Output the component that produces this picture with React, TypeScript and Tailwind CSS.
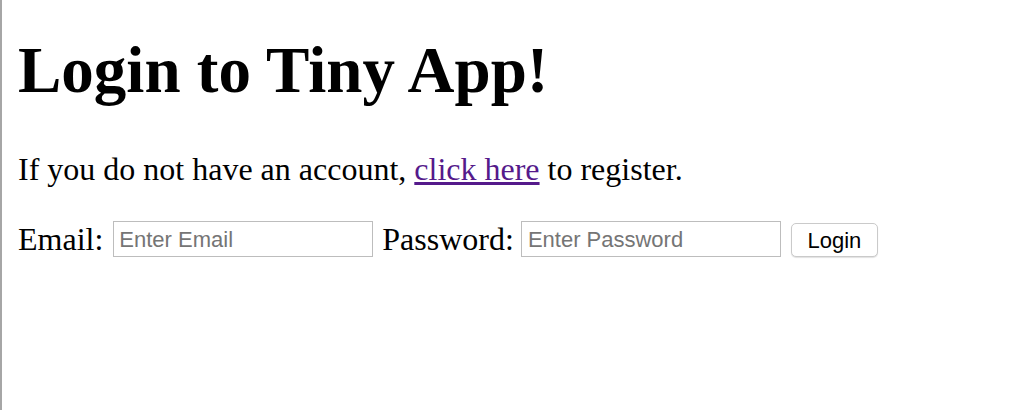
export default function App() {
  return (
    <div className="min-h-[410px] border-l-2 border-[#a6a6a6] bg-white pl-4 text-black font-['Liberation_Serif','Times_New_Roman',serif]">
      {/* Heading */}
      <h1 className="pt-[33px] text-[65px] font-bold leading-[74px]">Login to Tiny App!</h1>

      <p className="mt-[44px] text-[32px] leading-[37px]">
        If you do not have an account,{' '}
        <a href="#" className="text-[#551a8b] underline">
          click here
        </a>{' '}
        to register.
      </p>

      {/* Login form */}
      <form className="mt-[33px] flex h-[36px] items-center text-[32px] leading-[37px]" onSubmit={(e) => e.preventDefault()}>
        <label htmlFor="email">Email:</label>
        <input
          id="email"
          type="text"
          placeholder="Enter Email"
          className="ml-[10px] h-[36px] w-[260px] border border-[#bdbdbd] px-[5px] pt-[2px] font-['Liberation_Sans',Arial,sans-serif] text-[22px] leading-normal placeholder:text-[#757575] outline-none"
        />
        <label htmlFor="password" className="ml-[9px]">
          Password:
        </label>
        <input
          id="password"
          type="password"
          placeholder="Enter Password"
          className="ml-[7px] h-[36px] w-[260px] border border-[#bdbdbd] px-[6px] pt-[2px] font-['Liberation_Sans',Arial,sans-serif] text-[22px] leading-normal placeholder:text-[#757575] outline-none"
        />
        <button
          type="submit"
          className="ml-[10px] h-[34px] w-[87px] self-end rounded-[5px] border border-[#cacaca] bg-white pt-[1px] font-['Liberation_Sans',Arial,sans-serif] text-[22px] leading-none text-black shadow-[0_1px_1px_rgba(0,0,0,0.12)]"
        >
          Login
        </button>
      </form>
    </div>
  );
}
